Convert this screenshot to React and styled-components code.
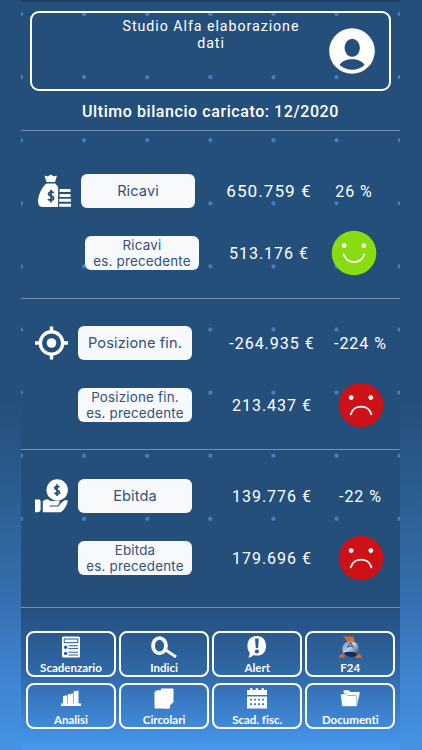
import React from "react";
import styled, { createGlobalStyle } from "styled-components";

const GlobalStyle = createGlobalStyle`
  * {
    box-sizing: border-box;
  }
  body {
    margin: 0;
    background: #254f7b;
  }
`;

const MoneyBagIcon = () => (
  <svg width="34" height="34" viewBox="0 0 34 34" fill="#fff">
    <path d="M6.5 1.8 L10 2.3 L12.7 0.5 L15.5 2.3 L19 1.8 L17 8 H8.5 Z" />
    <path d="M8.3 9.4 H17.3 C18.8 11 20 12.6 20.6 14.6 L20.2 33 H5 C1.8 33 0 31 0 28 C0 20.5 3.5 14 8.3 9.4 Z" />
    <path
      d="M15.6 18.9 C14.7 17.6 10.6 17.6 10.6 20 C10.6 22.5 15.6 21.4 15.6 24.3 C15.6 26.7 11 26.7 10 25 M13 15.8 V28.4"
      fill="none"
      stroke="#254f7b"
      strokeWidth="1.8"
    />
    <path
      d="M21.5 16.6 H32.5 M21.5 21.4 H32.5 M20.5 26.3 H33 M20.5 31.2 H33"
      fill="none"
      stroke="#fff"
      strokeWidth="3"
    />
    <path d="M20.7 14 V33" stroke="#254f7b" strokeWidth="1" />
  </svg>
);

const TargetIcon = () => (
  <svg width="33" height="34" viewBox="0 0 33 34">
    <g fill="none" stroke="#fff" strokeWidth="3.4">
      <circle cx="16.5" cy="17" r="11.2" />
      <path d="M16.5 0.5 V6 M16.5 28 V33.5 M0 17 H5.5 M27.5 17 H33" />
    </g>
    <circle cx="16.5" cy="17" r="4.8" fill="#fff" />
  </svg>
);

const HandCoinIcon = () => (
  <svg width="33" height="34" viewBox="0 0 33 34" fill="#fff">
    <circle cx="22.2" cy="11" r="10.7" />
    <path
      d="M24.5 8.3 C23.6 7 19.8 7 19.8 9.1 C19.8 11.5 24.6 10.6 24.6 13.3 C24.6 15.4 20.6 15.4 19.6 13.7 M22.1 5.2 V17"
      fill="none"
      stroke="#254f7b"
      strokeWidth="1.7"
    />
    <path d="M0 20.6 H4 Q5.6 20.6 5.6 22.4 V30.5 Q5.2 33.3 2.6 33.3 H0 Z" />
    <path d="M7.8 22.2 C10.5 19.8 13.5 20.2 16 22.1 H24.5 V25.5 L28.2 22.3 C30.2 20.4 32.2 20.6 32.8 22 C32 26 29.2 31 25.6 33.3 H7.8 Z" />
    <path
      d="M14.5 27 H22 C23.8 27 24.6 25.8 24.3 24.2"
      fill="none"
      stroke="#254f7b"
      strokeWidth="1.2"
    />
  </svg>
);

const Face = ({ happy }) => (
  <svg width="46" height="46" viewBox="0 0 46 46">
    <circle cx="23" cy="23" r="22.3" fill={happy ? "#88dc10" : "#cc1216"} />
    <circle cx="13.2" cy="15.6" r="2.4" fill="#fff" />
    <circle cx="32.8" cy="15.6" r="2.4" fill="#fff" />
    <path
      d={
        happy
          ? "M12.8 24.5 C15.5 34.5 30.5 34.5 33.2 24.5"
          : "M12.7 32.3 C15.5 22 30.8 22 33.4 32.3"
      }
      fill="none"
      stroke="#fff"
      strokeWidth="1.9"
      strokeLinecap="round"
    />
  </svg>
);

const AvatarIcon = () => (
  <svg width="46" height="46" viewBox="0 0 46 46">
    <circle cx="23" cy="23" r="22.8" fill="#fff" />
    <ellipse cx="23.2" cy="19.8" rx="7.7" ry="9" fill="#254f7b" />
    <path
      d="M10.5 37 C14.5 29.3 31.5 29.3 35.7 37 C29 43.4 17.5 43.4 10.5 37 Z"
      fill="#254f7b"
    />
  </svg>
);

const ListIcon = () => (
  <svg width="18" height="22" viewBox="0 0 18 22">
    <rect x="0" y="0.5" width="18" height="21" rx="1.5" fill="#fff" />
    <g fill="none" stroke="#2b5d96">
      <rect x="2.2" y="3" width="13.6" height="3.6" />
      <path d="M6.5 9.8 H16 M6.5 12.6 H16 M6.5 16.2 H16 M6.5 19 H16" />
    </g>
    <circle cx="3.6" cy="11.2" r="1.7" fill="#2b5d96" />
    <circle cx="3.6" cy="17.4" r="1.7" fill="#2b5d96" />
  </svg>
);

const SearchIcon = () => (
  <svg width="26" height="22" viewBox="0 0 26 22" fill="none" stroke="#fff">
    <ellipse cx="8.5" cy="9.7" rx="6.5" ry="7.7" strokeWidth="3.7" />
    <path d="M14 13.5 L25 21" strokeWidth="2.8" />
  </svg>
);

const AlertIcon = () => (
  <svg width="20" height="22" viewBox="0 0 20 22">
    <path
      d="M10 0 C15.5 0 19 4 19 10 C19 16 15.5 19.6 10 19.6 C8.5 19.6 7.5 19.5 6.5 19 C5 20.8 3.2 21.7 1 21.5 C2.4 20 2.8 18.5 2.5 16.5 C1 14.7 0.4 12.6 0.4 10 C0.4 4 4 0 10 0 Z"
      fill="#fff"
    />
    <path d="M8 2.5 H11.8 L11.1 12 H8.8 Z" fill="#2b5d96" />
    <circle cx="9.9" cy="15.5" r="2.1" fill="#2b5d96" />
  </svg>
);

const AgencyIcon = () => (
  <svg width="24" height="24" viewBox="0 0 24 24">
    <defs>
      <linearGradient id="globe" x1="0" y1="0" x2="1" y2="1">
        <stop offset="0" stopColor="#6384b0" />
        <stop offset="0.45" stopColor="#c4d3e5" />
        <stop offset="1" stopColor="#18345f" />
      </linearGradient>
    </defs>
    <path
      d="M5 1.5 H15 L17 6 H9 Z M1 22.5 C1.2 19.5 3 18.4 5.5 18.5 L7 22.5 Z M17 18.4 C21 17.6 23.5 19.5 23.7 22.8 H18 Z"
      fill="#dc6a2c"
    />
    <ellipse cx="12.5" cy="14" rx="8.2" ry="8" fill="url(#globe)" />
    <path
      d="M9.3 13 L12.5 7.5 L15.7 13 M10.5 11.3 H14.6"
      fill="none"
      stroke="#42628c"
      strokeWidth="1.2"
    />
    <path d="M5.5 18 C10 16 16 16.5 20 19.2 C16 23.2 9 23.2 5.5 18 Z" fill="#132d59" />
  </svg>
);

const ChartIcon = () => (
  <svg width="20" height="17" viewBox="0 0 20 17" fill="#fff">
    <path d="M2 14 V6 L6.4 5.3 V14 Z M7 14 V4.2 L12 3.5 V14 Z M12.6 14 V1.2 L17.5 0.5 V14 Z" />
    <rect x="0" y="13.4" width="20" height="2.6" />
  </svg>
);

const PagesIcon = () => (
  <svg width="20" height="21" viewBox="0 0 20 21" fill="#fff">
    <path d="M7 0.5 H18.5 Q19.5 0.5 19.5 1.5 V14 L16 17.5 H7 Z" />
    <path d="M0.5 4 L3 2.3 H14 V20.5 H1.5 Q0.5 20.5 0.5 19.5 Z" />
    <path d="M16 16 V20.5 H10 V16 Z" />
  </svg>
);

const CalendarIcon = () => (
  <svg width="20" height="21" viewBox="0 0 20 21">
    <path
      d="M0 2 H3 V0.3 H5.5 V2 H8.7 V0.3 H11.2 V2 H14.5 V0.3 H17 V2 H20 V7 H0 Z M0 8.6 H20 V20.5 H0 Z"
      fill="#fff"
    />
    <path
      d="M3 11.7 H17 M3 16.2 H17"
      fill="none"
      stroke="#3d7fcb"
      strokeWidth="1.7"
      strokeDasharray="2 2"
    />
  </svg>
);

const FolderIcon = () => (
  <svg width="20" height="17" viewBox="0 0 20 17">
    <path d="M3.5 0.3 H9 L10.5 2 H19 Q20 2 19.7 3.2 L17 15.5 H5 Z" fill="#fff" />
    <path
      d="M0.5 4 H6.5 L8 5.5 H15.5 Q16.7 5.5 16.7 6.8 L17 16.5 H3 Q2 16.5 1.8 15.4 Z"
      fill="#fff"
      stroke="#3d7fcb"
      strokeWidth="0.6"
    />
  </svg>
);

const SECTIONS = [
  {
    id: "ricavi",
    label: "Ricavi",
    icon: <MoneyBagIcon />,
    value: "650.759 €",
    percent: "26 %",
    previous: "513.176 €",
    happy: true,
    left: 17,
    top: 43,
    height: 168,
    shift: 4,
    gutter: 24,
    percentWidth: 70,
    valueSize: 17.2,
  },
  {
    id: "posizione",
    label: "Posizione fin.",
    icon: <TargetIcon />,
    value: "-264.935 €",
    percent: "-224 %",
    previous: "213.437 €",
    left: 14,
    top: 27,
    height: 151,
    shift: 0,
    gutter: 30,
    percentWidth: 77,
  },
  {
    id: "ebitda",
    label: "Ebitda",
    icon: <HandCoinIcon />,
    value: "139.776 €",
    percent: "-22 %",
    previous: "179.696 €",
    left: 14,
    top: 29,
    height: 158,
    shift: 0,
    gutter: 30,
    percentWidth: 77,
  },
];

const ACTIONS = [
  { label: "Scadenzario", icon: <ListIcon /> },
  { label: "Indici", icon: <SearchIcon /> },
  { label: "Alert", icon: <AlertIcon /> },
  { label: "F24", icon: <AgencyIcon /> },
  { label: "Analisi", icon: <ChartIcon /> },
  { label: "Circolari", icon: <PagesIcon /> },
  { label: "Scad. fisc.", icon: <CalendarIcon /> },
  { label: "Documenti", icon: <FolderIcon /> },
];

const BalanceSection = ({ section }) => (
  <Section $top={section.top} $left={section.left} $height={section.height}>
    <Row $gutter={section.gutter} $percentWidth={section.percentWidth}>
      <IconSlot>{section.icon}</IconSlot>
      <Pill>{section.label}</Pill>
      <Value $size={section.valueSize}>{section.value}</Value>
      <Percent>{section.percent}</Percent>
    </Row>
    <Row $gutter={section.gutter} $percentWidth={section.percentWidth}>
      <IconSlot />
      <Pill $small $shift={section.shift}>
        <span>{section.label}</span>
        <span>es. precedente</span>
      </Pill>
      <Value>{section.previous}</Value>
      <FaceSlot>
        <Face happy={section.happy} />
      </FaceSlot>
    </Row>
  </Section>
);

const App = () => {
  return (
    <Page>
      <GlobalStyle />
      <Panel>
        <Header>
          <Company>Studio Alfa elaborazione dati</Company>
          <AvatarIcon />
        </Header>
        <LastBalance>Ultimo bilancio caricato: 12/2020</LastBalance>
        {SECTIONS.map((section) => (
          <BalanceSection key={section.id} section={section} />
        ))}
        <Actions>
          {ACTIONS.map((action) => (
            <ActionButton key={action.label}>
              <ActionIcon>{action.icon}</ActionIcon>
              <ActionLabel>{action.label}</ActionLabel>
            </ActionButton>
          ))}
        </Actions>
      </Panel>
    </Page>
  );
};

const Page = styled.div`
  display: flex;
  width: 422px;
  height: 750px;
  padding: 0 22px 0 21px;
  overflow: hidden;
  font-family: Roboto, sans-serif;
  color: #fff;
  background: linear-gradient(
    #254f7b 400px,
    #2b5b8d 480px,
    #3670b0 600px,
    #3f85d2 680px,
    #4592e4 750px
  );
`;

/* the dots stop above the toolbar, where the blue starts to fade in */
const Panel = styled.main`
  display: flex;
  flex-direction: column;
  width: 379px;
  height: 750px;
  border-top: 2px solid #203f64;
  background-color: #254f7b;
  background-image: linear-gradient(
      transparent 550px,
      #254f7b 550px,
      #254f7b 600px,
      #28568a 625px,
      #3069a8 672px,
      #4898f0 748px
    ),
    radial-gradient(circle, #4281c4 1.7px, transparent 2.4px);
  background-size: 100% 100%, 63.1px 63.1px;
  background-position: 0 0, -31.5px -19.5px;
  background-repeat: no-repeat, repeat;
  background-clip: padding-box;
`;

const Header = styled.header`
  display: flex;
  flex: none;
  justify-content: space-between;
  width: 361px;
  height: 80px;
  margin: 9px 0 0 9px;
  padding: 5px 14px 0 82px;
  border: 2px solid #fff;
  border-radius: 9px;
  svg {
    margin-top: 10px;
  }
`;

const Company = styled.div`
  width: 194px;
  font-size: 14.2px;
  line-height: 16.5px;
  letter-spacing: 0.96px;
  text-align: center;
`;

const LastBalance = styled.h1`
  flex: none;
  height: 39px;
  margin: 0;
  font-size: 16px;
  font-weight: 500;
  line-height: 42px;
  letter-spacing: 0.57px;
  text-align: center;
`;

const Section = styled.section`
  display: flex;
  flex: none;
  flex-direction: column;
  gap: 28px;
  height: ${({ $height }) => $height}px;
  padding: ${({ $top, $left }) => `${$top}px 0 0 ${$left}px`};
  border-top: 1px solid #7391b0;
`;

const Row = styled.div`
  display: grid;
  grid-template-columns: 43px 114px ${({ $gutter, $percentWidth }) =>
      `${$gutter}px 100px ${$percentWidth}px`};
  grid-template-rows: 34px;
  align-items: center;
  height: 34px;
`;

const IconSlot = styled.div`
  display: flex;
`;

const Pill = styled.div`
  display: flex;
  flex-direction: column;
  align-items: center;
  justify-content: center;
  height: 34px;
  margin: 0 ${({ $shift }) => -($shift || 0)}px 0
    ${({ $shift }) => $shift || 0}px;
  border-radius: 6px;
  background: #f8f9fa;
  color: #31527b;
  font-family: Inter, sans-serif;
  font-size: ${({ $small }) => ($small ? 13.4 : 14.6)}px;
  letter-spacing: ${({ $small }) => ($small ? 0.2 : 0.1)}px;
  line-height: 16px;
  white-space: nowrap;
`;

const Value = styled.div`
  grid-column: 4;
  font-size: ${({ $size }) => $size || 16}px;
  letter-spacing: 1px;
  text-align: center;
  white-space: nowrap;
`;

const Percent = styled(Value)`
  grid-column: 5;
`;

const FaceSlot = styled.div`
  display: flex;
  grid-column: 5;
  justify-content: center;
`;

const Actions = styled.nav`
  display: grid;
  flex: none;
  grid-template-columns: repeat(4, 90px);
  grid-auto-rows: 46px;
  gap: 6px 3.1px;
  padding: 23px 0 0 5px;
  border-top: 1px solid #7391b0;
`;

const ActionButton = styled.button`
  display: flex;
  flex-direction: column;
  align-items: center;
  padding: 0;
  border: 2px solid #fff;
  border-radius: 8px;
  background: none;
  color: #fff;
`;

const ActionIcon = styled.span`
  display: flex;
  align-items: center;
  justify-content: center;
  height: 27px;
`;

const ActionLabel = styled.span`
  font-family: Lato, sans-serif;
  font-size: 11.5px;
  font-weight: 700;
  font-variant-ligatures: none;
  line-height: 15px;
`;

export default App;
